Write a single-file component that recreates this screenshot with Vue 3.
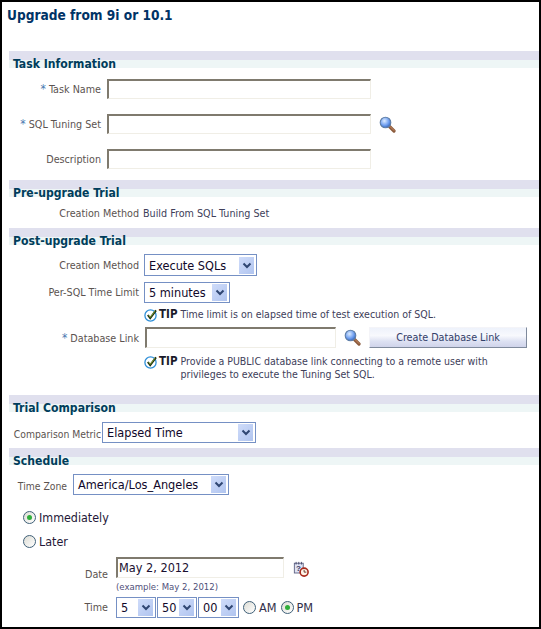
<script setup>
const timeParts = [
  { value: '5', width: 40 },
  { value: '50', width: 40 },
  { value: '00', width: 41 }
]
</script>

<template>
  <div class="frame">
    <h1 class="title">Upgrade from 9i or 10.1</h1>

    <section class="task">
      <h2 class="bar">Task Information</h2>
      <div class="row r-task first">
        <label class="label w92"><span class="req">*</span> Task Name</label>
        <div class="input w264"></div>
      </div>
      <div class="row r-task">
        <label class="label w92"><span class="req">*</span> SQL Tuning Set</label>
        <div class="input w264"></div>
        <svg class="search s-task" viewBox="0 0 17 17" width="17" height="17">
          <defs>
            <radialGradient id="lens" cx="0.4" cy="0.35" r="0.7">
              <stop offset="0" stop-color="#dcebff" />
              <stop offset="0.6" stop-color="#6f9ff0" />
              <stop offset="1" stop-color="#2f5fb8" />
            </radialGradient>
          </defs>
          <path d="M10.5 10.5 L15 15" stroke="#8a5a3c" stroke-width="3.2" stroke-linecap="round" />
          <path d="M11 10.5 L15 14.5" stroke="#c98a63" stroke-width="1" stroke-linecap="round" />
          <circle cx="6.5" cy="6.5" r="5.3" fill="url(#lens)" stroke="#5f7fa8" stroke-width="1.1" />
        </svg>
      </div>
      <div class="row r-task">
        <label class="label w92">Description</label>
        <div class="input w264"></div>
      </div>
    </section>

    <section class="pre">
      <h2 class="bar">Pre-upgrade Trial</h2>
      <div class="row static">
        <label class="label w130">Creation Method</label>
        <span class="value">Build From SQL Tuning Set</span>
      </div>
    </section>

    <section class="post">
      <h2 class="bar">Post-upgrade Trial</h2>
      <div class="row sel-row-1">
        <label class="label w130">Creation Method</label>
        <div class="select w113"><span>Execute SQLs</span><i class="arrow"><svg viewBox="0 0 10 7" width="10" height="7"><path d="M1.5 1.5 L5 5 L8.500 1.500" fill="none" stroke="#2f4672" stroke-width="2" /></svg></i></div>
      </div>
      <div class="row sel-row-2">
        <label class="label w130">Per-SQL Time Limit</label>
        <div class="select w86"><span>5 minutes</span><i class="arrow"><svg viewBox="0 0 10 7" width="10" height="7"><path d="M1.5 1.5 L5 5 L8.500 1.500" fill="none" stroke="#2f4672" stroke-width="2" /></svg></i></div>
      </div>
      <div class="tip tip-1">
        <svg class="check" viewBox="0 0 14 14" width="14" height="14">
          <circle cx="6.500" cy="7.500" r="5.600" fill="#fff" stroke="#2f8fd8" stroke-width="1.300" />
          <path d="M3.800 7 L6.200 10 L12 2.300" fill="none" stroke="#1a2e10" stroke-width="2" />
          <path d="M4.600 7.300 L6.300 9.300 L11 3" fill="none" stroke="#a9c83c" stroke-width="0.700" />
        </svg>
        <b>TIP</b>
        <span>Time limit is on elapsed time of test execution of SQL.</span>
      </div>
      <div class="row db-row">
        <label class="label w130"><span class="req">*</span> Database Link</label>
        <div class="input w191"></div>
        <svg class="search s-db" viewBox="0 0 17 17" width="17" height="17">
          <path d="M10.5 10.5 L15 15" stroke="#8a5a3c" stroke-width="3.2" stroke-linecap="round" />
          <path d="M11 10.500 L15 14.500" stroke="#c98a63" stroke-width="1" stroke-linecap="round" />
          <circle cx="6.500" cy="6.500" r="5.300" fill="url(#lens)" stroke="#5f7fa8" stroke-width="1.100" />
        </svg>
        <button class="btn" type="button">Create Database Link</button>
      </div>
      <div class="tip tip-2">
        <svg class="check" viewBox="0 0 14 14" width="14" height="14">
          <circle cx="6.500" cy="7.500" r="5.600" fill="#fff" stroke="#2f8fd8" stroke-width="1.300" />
          <path d="M3.800 7 L6.200 10 L12 2.300" fill="none" stroke="#1a2e10" stroke-width="2" />
          <path d="M4.600 7.300 L6.300 9.300 L11 3" fill="none" stroke="#a9c83c" stroke-width="0.700" />
        </svg>
        <b>TIP</b>
        <span>Provide a PUBLIC database link connecting to a remote user with<br />privileges to execute the Tuning Set SQL.</span>
      </div>
    </section>

    <section class="compare">
      <h2 class="bar">Trial Comparison</h2>
      <div class="row cmp-row">
        <label class="label w92 tight small">Comparison Metric</label>
        <div class="select w154"><span>Elapsed Time</span><i class="arrow"><svg viewBox="0 0 10 7" width="10" height="7"><path d="M1.5 1.5 L5 5 L8.500 1.500" fill="none" stroke="#2f4672" stroke-width="2" /></svg></i></div>
      </div>
    </section>

    <section class="schedule">
      <h2 class="bar">Schedule</h2>
      <div class="row tz-row">
        <label class="label w58 small">Time Zone</label>
        <div class="select w156"><span>America/Los_Angeles</span><i class="arrow"><svg viewBox="0 0 10 7" width="10" height="7"><path d="M1.5 1.5 L5 5 L8.500 1.500" fill="none" stroke="#2f4672" stroke-width="2" /></svg></i></div>
      </div>
      <div class="choice c-now"><i class="radio on"></i><span>Immediately</span></div>
      <div class="choice c-later"><i class="radio"></i><span>Later</span></div>
      <div class="row date-row">
        <label class="label w99">Date</label>
        <div class="input w168 filled">May 2, 2012</div>
        <svg class="cal" viewBox="0 0 18 18" width="16" height="16">
          <rect x="1.500" y="2.500" width="10" height="11" fill="#dfe3f4" stroke="#5b5f80" />
          <path d="M3.500 1 V4 M6.500 1 V4 M9.500 1 V4" stroke="#44476a" />
          <text x="3.300" y="11.500" class="cal-q">?</text>
          <circle cx="12.500" cy="12.500" r="4.500" fill="#fff4e8" stroke="#a82a1c" stroke-width="1.800" />
          <path d="M12.500 10 V12.500 H15" fill="none" stroke="#5a2a1c" />
        </svg>
      </div>
      <div class="hint">(example: May 2, 2012)</div>
      <div class="row time-row">
        <label class="label w99">Time</label>
        <div class="time-selects">
          <div v-for="part in timeParts" :key="part.value" class="select" :style="{ width: part.width + 'px' }">
            <span>{{ part.value }}</span><i class="arrow"><svg viewBox="0 0 10 7" width="10" height="7"><path d="M1.5 1.5 L5 5 L8.500 1.500" fill="none" stroke="#2f4672" stroke-width="2" /></svg></i>
          </div>
        </div>
        <div class="ampm">
          <i class="radio"></i><span>AM</span>
          <i class="radio on"></i><span>PM</span>
        </div>
      </div>
    </section>
  </div>
</template>

<style>
html, body { margin: 0; background: #fff; }
</style>

<style scoped>
.frame {
  box-sizing: border-box;
  width: 541px;
  height: 629px;
  overflow: hidden;
  background: #fff;
  border: solid #000;
  border-width: 2px;
  padding: 0 0 0 7px;
  font-family: "DejaVu Sans", sans-serif;
  font-stretch: condensed;
  font-size: 10.700px;
  color: #4f4f4f;
}
.title {
  margin: 0 0 0 -2px;
  padding: 5px 0 0 0;
  height: 49px;
  box-sizing: border-box;
  font-size: 13.600px;
  line-height: 17px;
  font-weight: 700;
  color: #003366;
}
.bar {
  margin: 0;
  height: 17px;
  padding: 6px 0 0 4px;
  box-sizing: border-box;
  font-size: 12.100px;
  line-height: 15px;
  font-weight: 700;
  color: #003d5b;
  background: linear-gradient(#e0e0ee 0, #e0e0ee 9px, #eef6f6 9px, #eef6f6 17px);
}
.row { display: flex; align-items: center; }
.label { flex: none; text-align: right; white-space: nowrap; color: #5b5350; }
.small { font-size: 10.300px; padding-top: 3px; }
.req { color: #4a78b0; font-size: 12px; }
.w92 { width: 92px; margin-right: 6px; }
.w92.tight { margin-right: 1px; }
.w130 { width: 130px; margin-right: 5px; }
.w58 { width: 58px; margin-right: 6px; }
.w99 { width: 99px; margin-right: 8px; }

.input {
  flex: none;
  box-sizing: border-box;
  height: 20px;
  background: #fff;
  border: 1px solid #f0eee6;
  border-top: 2px solid #7f7a6e;
  border-left: 2px solid #7f7a6e;
}
.w264 { width: 264px; }
.w191 { width: 191px; height: 21px; margin-left: 1px; }
.w168 { width: 168px; height: 21px; }
.filled { font-size: 12.600px; line-height: 18px; color: #1a1030; padding-left: 1px; }

.select {
  flex: none;
  box-sizing: border-box;
  display: flex;
  align-items: center;
  justify-content: space-between;
  height: 21px;
  padding: 1px 2px 1px 4px;
  background: #fff;
  border: 1px solid #7590c4;
  font-size: 12.600px;
  color: #10082a;
  white-space: nowrap;
}
.w113 { width: 113px; height: 22px; }
.w86 { width: 86px; }
.w154 { width: 154px; }
.w156 { width: 156px; }
.arrow {
  flex: none;
  display: flex;
  align-items: center;
  justify-content: center;
  width: 15px;
  height: 17px;
  background: linear-gradient(135deg, #cfdcfa, #b0c4ef);
}

.first { margin-top: 11px; }
.r-task + .r-task { margin-top: 15px; }
.search { flex: none; display: block; }
.s-task { margin-left: 8px; }
.s-db { margin-left: 8px; margin-right: 8px; }

.pre { margin-top: 11px; }
.static { margin-top: 8px; height: 16px; }
.value { color: #40405a; margin-left: -1px; }

.post { margin-top: 7px; }
.sel-row-1 { margin-top: 9px; }
.sel-row-2 { margin-top: 6px; height: 21px; }
.tip { display: flex; align-items: flex-start; margin-left: 135px; font-size: 10.500px; line-height: 13px; color: #40405a; }
.tip b { color: #1a1a2a; margin: 0 3px 0 1px; font-weight: 700; font-size: 11.500px; }
.check { flex: none; display: block; }
.tip-1 { margin-top: 5px; }
.tip-2 { margin-top: 7px; }
.db-row { margin-top: 5px; }
.btn {
  flex: none;
  box-sizing: border-box;
  width: 158px;
  height: 21px;
  padding: 0;
  font: inherit;
  color: #33406a;
  background: linear-gradient(#eef2fb, #f8f9fd 40%, #dde1f2 70%, #cfd3ea);
  border: 1px solid #f4f4f8;
  border-right-color: #7f8a9c;
  border-bottom-color: #7f8a9c;
}

.compare { margin-top: 14px; }
.cmp-row { margin-top: 10px; }
.schedule { margin-top: 5px; }
.tz-row { margin-top: 9px; }
.choice {
  display: flex;
  align-items: center;
  margin-left: 14px;
  font-size: 12.400px;
  color: #241838;
}
.c-now { margin-top: 13px; height: 18px; }
.c-later { margin-top: 6px; height: 18px; }
.radio {
  flex: none;
  box-sizing: border-box;
  display: block;
  position: relative;
  width: 13px;
  height: 13px;
  margin-right: 3px;
  border: 1px solid #3f6078;
  border-radius: 50%;
  background: linear-gradient(135deg, #dcdcd4, #fff);
}
.radio.on::after {
  content: "";
  position: absolute;
  left: 3px;
  top: 3px;
  width: 5px;
  height: 5px;
  border-radius: 50%;
  background: #2fae3a;
}
.date-row { margin-top: 7px; }
.date-row .label { align-self: flex-end; margin-bottom: -3px; }
.cal { flex: none; display: block; margin-left: 9px; margin-top: 2px; }
.cal-q { font-size: 9px; font-weight: 700; fill: #33365a; font-family: "Liberation Sans", sans-serif; }
.hint { margin: 2px 0 0 107px; font-size: 9.500px; line-height: 13px; color: #50507a; }
.time-row { margin-top: 4px; }
.time-selects { display: flex; gap: 1px; }
.ampm { display: flex; align-items: center; margin-left: 4px; font-size: 12.600px; color: #33304a; }
.ampm span { margin-right: 4px; }
</style>
